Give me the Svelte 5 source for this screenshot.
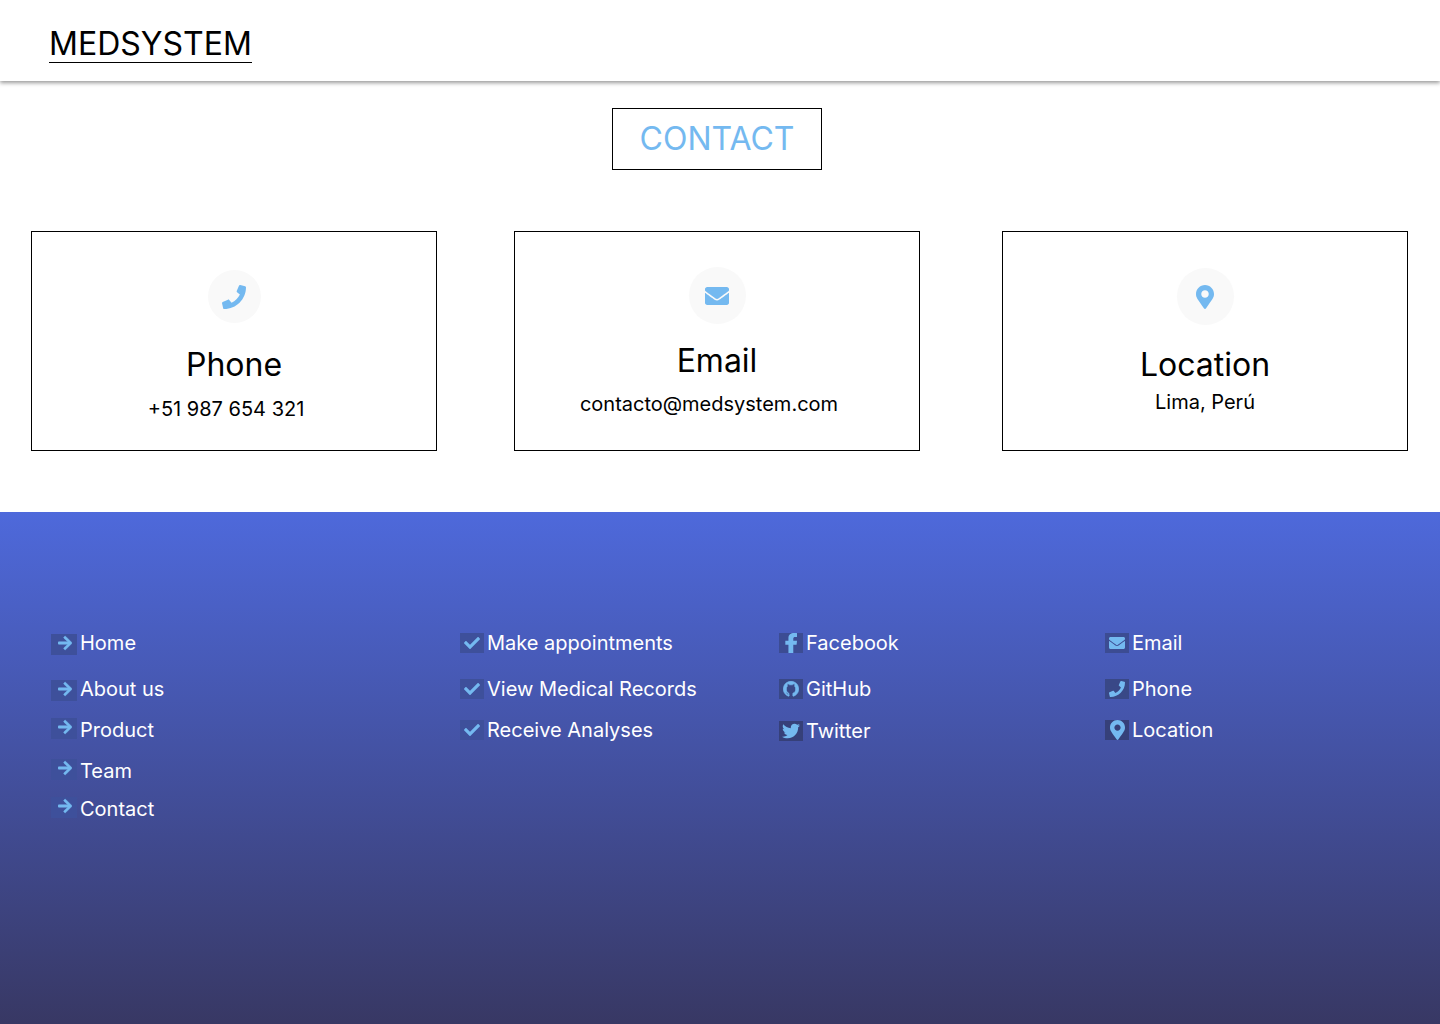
<script>
  const icons = {
    phone: {
      box: '0 0 512 512',
      d: 'M493.4 24.6l-104-24c-11.3-2.6-22.9 3.3-27.5 13.9l-48 112c-4.2 9.800-1.400 21.300 6.900 28l60.600 49.600c-36 76.700-98.900 140.500-177.200 177.200l-49.600-60.600c-6.800-8.300-18.200-11.100-28-6.900l-112 48C3.900 366.500-2 378.100.6 389.400l24 104C27.100 504.200 36.700 512 48 512c256.100 0 464-207.500 464-464 0-11.200-7.700-20.900-18.600-23.400z'
    },
    email: {
      box: '0 0 512 512',
      d: 'M502.300 190.800c3.900-3.100 9.700-.2 9.700 4.700V400c0 26.500-21.500 48-48 48H48c-26.500 0-48-21.500-48-48V195.600c0-5 5.700-7.800 9.700-4.700 22.400 17.400 52.100 39.500 154.100 113.600 21.100 15.400 56.700 47.800 92.200 47.600 35.700.3 72-32.800 92.300-47.600 102-74.100 131.600-96.300 154-113.700zM256 320c23.200.4 56.600-29.200 73.400-41.400 132.700-96.300 142.800-104.700 173.400-128.700 5.800-4.500 9.200-11.500 9.200-18.900v-19c0-26.500-21.500-48-48-48H48c-26.500 0-48 21.500-48 48v19c0 7.400 3.400 14.300 9.200 18.900 30.600 23.900 40.700 32.400 173.400 128.700 16.800 12.200 50.200 41.800 73.400 41.400z'
    },
    pin: {
      box: '0 0 384 512',
      d: 'M172.300 501.700C27 291 0 269.400 0 192 0 86 86 0 192 0s192 86 192 192c0 77.400-27 99-172.300 309.700-9.500 13.800-29.900 13.800-39.400 0zM192 272c44.200 0 80-35.800 80-80s-35.800-80-80-80-80 35.800-80 80 35.800 80 80 80z'
    },
    arrow: {
      box: '0 0 448 512',
      d: 'M190.500 66.900l22.200-22.200c9.400-9.400 24.600-9.400 33.900 0L441 239c9.400 9.400 9.400 24.600 0 33.900L246.600 467.300c-9.400 9.400-24.600 9.400-33.900 0l-22.200-22.200c-9.500-9.500-9.300-25 .4-34.300L311.400 296H24c-13.300 0-24-10.700-24-24v-32c0-13.300 10.700-24 24-24h287.400L190.900 101.200c-9.800-9.300-10-24.800-.4-34.300z'
    },
    check: {
      box: '0 0 512 512',
      d: 'M173.900 439.400L7.500 273c-10-10-10-26.200 0-36.200l36.200-36.200c10-10 26.200-10 36.200 0L192 312.700 432.100 72.600c10-10 26.200-10 36.200 0l36.200 36.200c10 10 10 26.200 0 36.200L210.100 439.400c-10 10-26.200 10-36.200 0z'
    },
    facebook: {
      box: '0 0 320 512',
      d: 'M296 300l12-104H212v-50c0-30 14-46 50-46h46V4S270 0 234 0C148 0 88 44 88 130v66H8v104h80v212h124V300z'
    },
    github: {
      box: '0 0 24 24',
      d: 'M12 .5a11.500 11.500 0 0 0-4 22.300l1.200-.4v-2.200c-2.400.4-3.300-.4-4-2-.3-.6-.7-1-1.100-1.300.9-.3 1.800.2 2.400 1.100.7 1 1.600 1.300 2.800.9C6.500 17.500 5 15.500 5 12c0-1.800.5-3 1.500-4.200-.4-1.300-.3-2.500.1-3.500 1.500.1 2.600.7 3.600 1.500a9 9 0 0 1 3.600 0c1-.8 2.100-1.400 3.600-1.500.4 1 .5 2.200.1 3.500C18.500 9 19 10.200 19 12c0 3.500-1.500 5.500-4.200 6.400v4l1.200.4A11.500 11.500 0 0 0 12 .5z'
    },
    twitter: {
      box: '0 0 512 512',
      d: 'M459.400 151.700c.3 4.500.3 9.100.3 13.600 0 138.700-105.600 298.600-298.600 298.600-59.500 0-114.700-17.200-161.100-47.100 8.400 1 16.600 1.300 25.300 1.300 49.100 0 94.200-16.600 130.300-44.800-46.100-1-84.800-31.200-98.100-72.800 6.500 1 13 1.600 19.800 1.600 9.400 0 18.800-1.300 27.600-3.600-48.100-9.700-84.100-52-84.100-103v-1.300c14 7.800 30.200 12.700 47.400 13.300-28.300-18.800-46.800-51-46.800-87.400 0-19.500 5.200-37.400 14.300-53 51.700 63.700 129.300 105.300 216.400 109.800-1.600-7.800-2.600-15.900-2.600-24 0-57.800 46.800-104.900 104.900-104.900 30.200 0 57.500 12.700 76.700 33.100 23.700-4.500 46.500-13.300 66.600-25.300-7.800 24.400-24.400 44.800-46.100 57.800 21.100-2.300 41.600-8.100 60.400-16.200-14.300 20.800-32.200 39.300-52.600 54.300z'
    }
  };

  const cards = [
    { id: 'phone', title: 'Phone', detail: '+51 987 654 321', icon: 'phone' },
    { id: 'email', title: 'Email', detail: 'contacto@medsystem.com', icon: 'email' },
    { id: 'location', title: 'Location', detail: 'Lima, Perú', icon: 'pin' }
  ];

  const columns = [
    {
      id: 'pages',
      label: 'Pages',
      links: [
        ['Home', 'arrow'],
        ['About us', 'arrow'],
        ['Product', 'arrow'],
        ['Team', 'arrow'],
        ['Contact', 'arrow']
      ]
    },
    {
      id: 'services',
      label: 'Services',
      links: [
        ['Make appointments', 'check'],
        ['View Medical Records', 'check'],
        ['Receive Analyses', 'check']
      ]
    },
    {
      id: 'social',
      label: 'Social',
      links: [
        ['Facebook', 'facebook'],
        ['GitHub', 'github'],
        ['Twitter', 'twitter']
      ]
    },
    {
      id: 'reach',
      label: 'Contact details',
      links: [
        ['Email', 'email'],
        ['Phone', 'phone'],
        ['Location', 'pin']
      ]
    }
  ];
</script>

{#snippet glyph(name)}
  <svg class="glyph {name}" viewBox={icons[name].box} aria-hidden="true">
    <path d={icons[name].d} />
  </svg>
{/snippet}

<div class="page">
  <header>
    <a class="brand" href="#home">MEDSYSTEM</a>
  </header>

  <main>
    <h1>CONTACT</h1>
    {#each cards as card}
      <section class="card {card.id}">
        <span class="disc">{@render glyph(card.icon)}</span>
        <h2>{card.title}</h2>
        <p>{card.detail}</p>
      </section>
    {/each}
  </main>

  <footer>
    {#each columns as column}
      <nav class={column.id} aria-label={column.label}>
        <ul>
          {#each column.links as [text, icon]}
            <li>
              <a href="#{text.toLowerCase().replaceAll(' ', '-')}">
                <span class="tile">{@render glyph(icon)}</span>
                {text}
              </a>
            </li>
          {/each}
        </ul>
      </nav>
    {/each}
  </footer>
</div>

<style>
  :global(body) {
    background: #fff;
  }

  .page {
    display: flex;
    flex-direction: column;
    min-height: 100vh;
    font-family: Inter, 'Liberation Sans', sans-serif;
    font-size: 20px;
    line-height: 24px;
    color: #000;
  }

  .page :global(*) {
    box-sizing: border-box;
  }

  header {
    display: flex;
    padding: 26px 49px 18px;
    box-shadow: 0 2px 4px rgba(0, 0, 0, 0.4);
  }

  .brand {
    border-bottom: 1px solid #000;
    font-size: 32px;
    line-height: 36px;
    color: #000;
    text-decoration: none;
  }

  main {
    display: grid;
    grid-template-columns: 406fr 77fr 406fr 82fr 406fr;
    row-gap: 61px;
    padding: 27px 32px 61px 31px;
  }

  h1,
  h2,
  p {
    margin: 0;
    font-weight: 400;
  }

  h1 {
    grid-column: 3;
    justify-self: center;
    padding: 10px 27px;
    border: 1px solid #000;
    font-size: 32px;
    line-height: 40px;
    color: #74b9f0;
  }

  .card {
    grid-row: 2;
    display: flex;
    flex-direction: column;
    align-items: center;
    min-height: 220px;
    padding: 36px 0 24px;
    border: 1px solid #000;
  }

  .card.phone {
    grid-column: 1;
    padding-top: 38px;
  }

  .card.email {
    grid-column: 3;
    padding-top: 35px;
  }

  .card.location {
    grid-column: 5;
  }

  .disc {
    display: grid;
    place-items: center;
    width: 57px;
    height: 57px;
    border-radius: 50%;
    background: #f9f9f9;
  }

  .phone .disc {
    width: 53px;
    height: 53px;
  }

  h2 {
    margin: 20px 0 5px;
    font-size: 32px;
    line-height: 40px;
  }

  .phone h2 {
    margin: 22px 0 12px;
  }

  .email h2 {
    margin: 17px 0 11px;
  }

  .phone p,
  .email p {
    padding-right: 16px;
  }

  .glyph {
    display: block;
    height: 24px;
    fill: #74b9f0;
  }

  footer {
    flex: 1;
    display: grid;
    grid-template-columns: 409fr 319fr 326fr 284fr;
    align-items: start;
    padding: 119px 51px 119px;
    background: linear-gradient(#4e69db, #383864);
  }

  ul {
    display: grid;
    grid-template-rows: 46px 41px 41px 38px 24px;
    margin: 0;
    padding: 0;
    list-style: none;
  }

  .social ul {
    grid-template-rows: 46px 42px 24px;
  }

  footer a {
    display: flex;
    align-items: center;
    gap: 3px;
    width: fit-content;
    height: 24px;
    color: #fff;
    text-decoration: none;
  }

  .tile {
    display: grid;
    place-items: center;
    width: 24px;
    height: 20px;
    background: #3e509b;
  }

  .social .tile,
  .reach .tile {
    background: #3c4c93;
  }

  .social li:nth-child(2) .tile,
  .reach li:nth-child(2) .tile {
    background: #394887;
  }

  .social li:nth-child(3) .tile,
  .reach li:nth-child(3) .tile {
    background: #364079;
  }

  .tile .glyph {
    height: 16px;
  }

  .tile .github {
    stroke: #74b9f0;
    stroke-width: 1px;
  }

  .tile .twitter {
    height: 18px;
  }

  .tile .pin,
  .tile .facebook {
    height: 20px;
  }

  .pages .tile {
    width: 26px;
    height: 21px;
    padding: 0 0 4px 2px;
  }

  .pages .glyph {
    stroke: #74b9f0;
    stroke-width: 16px;
  }

  .pages a {
    align-items: flex-start;
  }

  .pages li:nth-child(-n + 2) .tile {
    align-self: flex-end;
  }
</style>
